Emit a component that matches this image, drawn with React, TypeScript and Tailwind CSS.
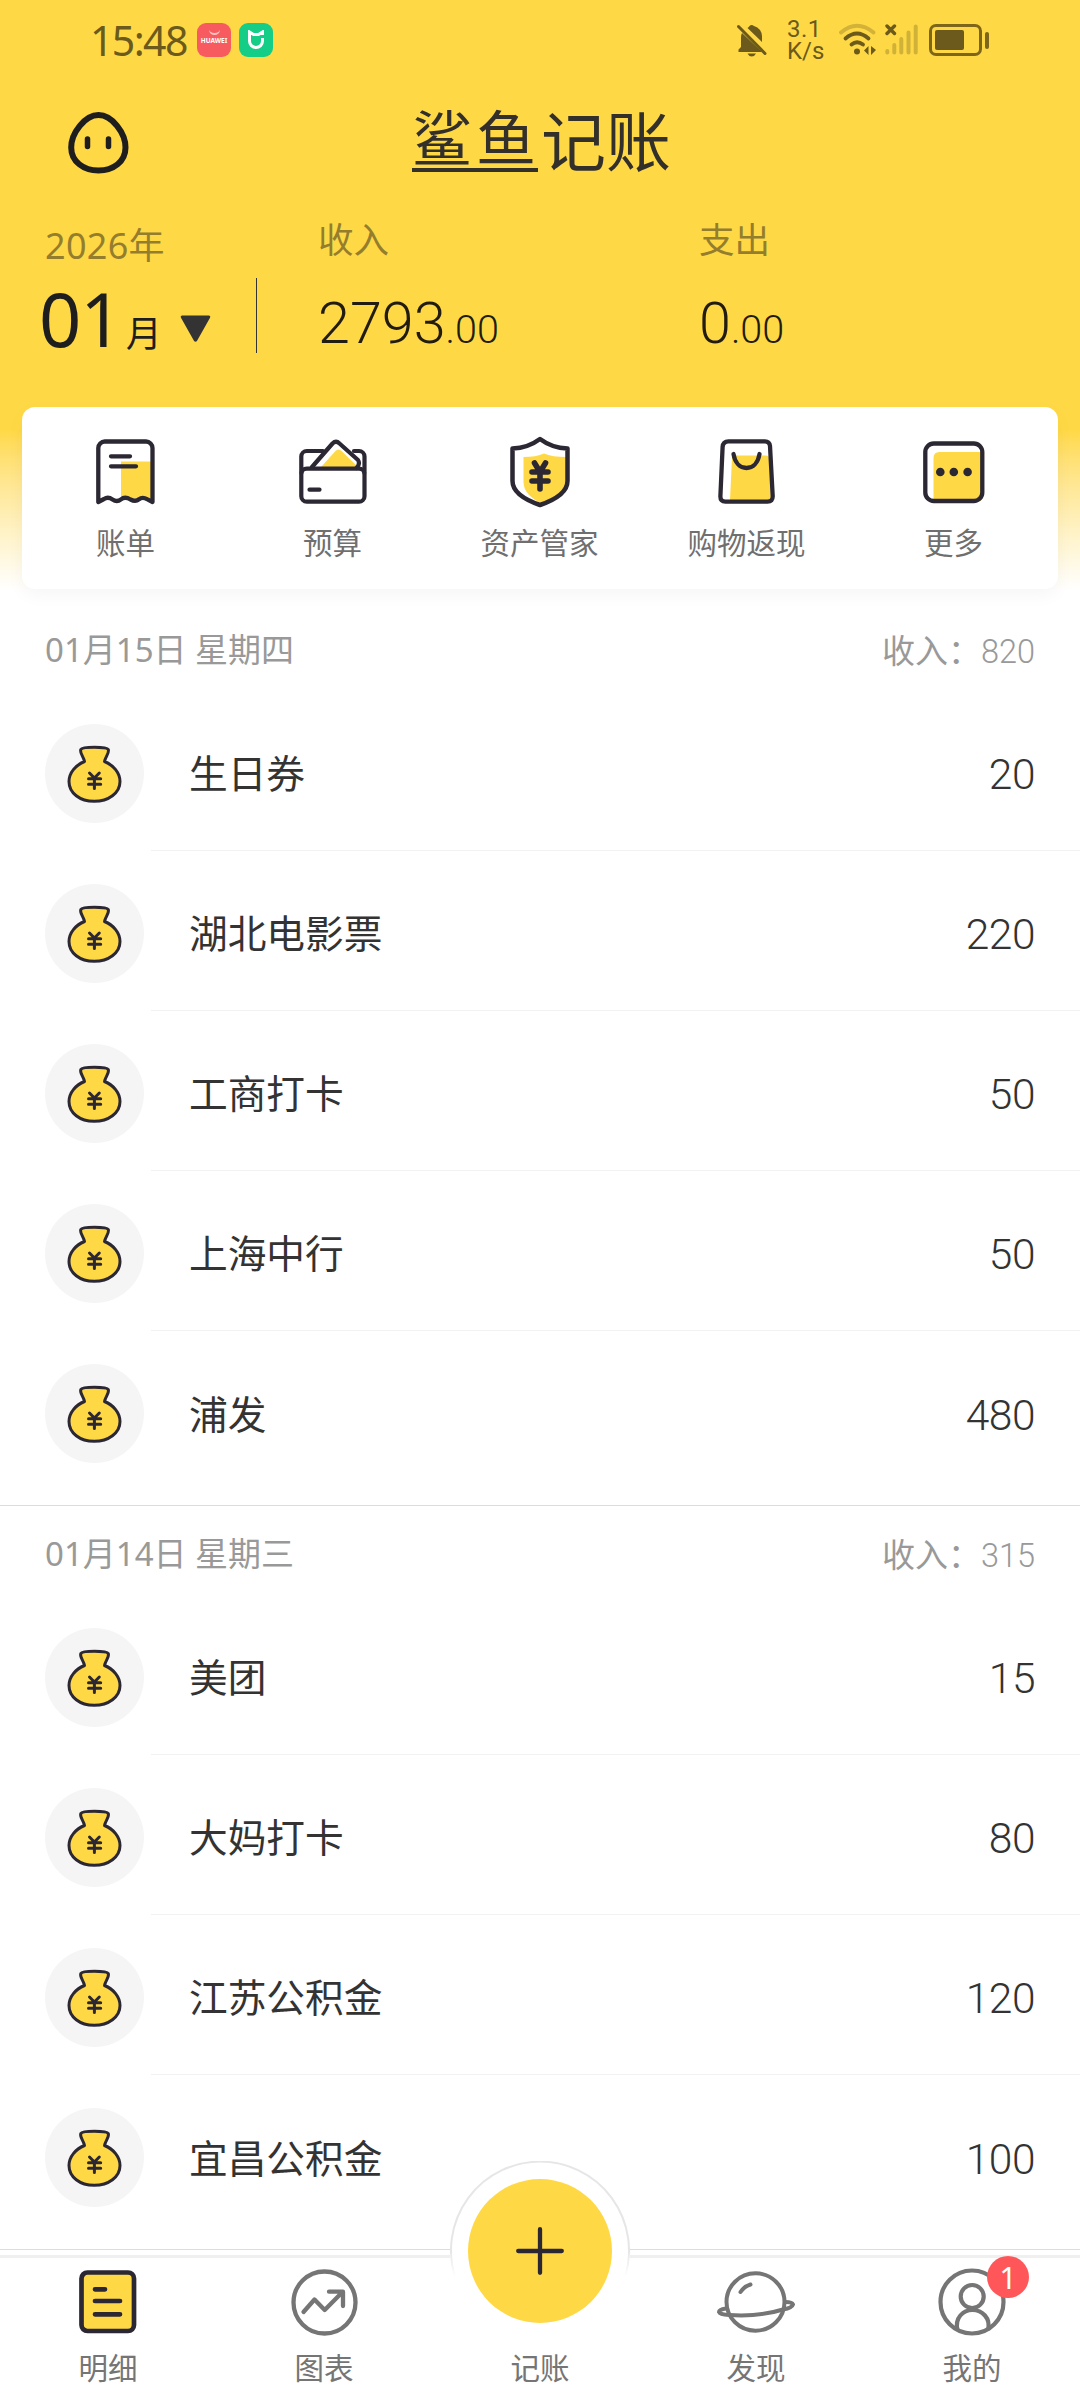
import type { ReactNode } from "react";

const INK = "#2b2733";
const YELLOW = "#ffd945";
const GRAY = "#757575";
const STATUS = "#6b5a1c";

type Entry = { name: string; amount: number };
type Day = { date: string; total: number; entries: Entry[] };

const days: Day[] = [
  {
    date: "01月15日 星期四",
    total: 820,
    entries: [
      { name: "生日券", amount: 20 },
      { name: "湖北电影票", amount: 220 },
      { name: "工商打卡", amount: 50 },
      { name: "上海中行", amount: 50 },
      { name: "浦发", amount: 480 },
    ],
  },
  {
    date: "01月14日 星期三",
    total: 315,
    entries: [
      { name: "美团", amount: 15 },
      { name: "大妈打卡", amount: 80 },
      { name: "江苏公积金", amount: 120 },
      { name: "宜昌公积金", amount: 100 },
    ],
  },
];

function BillIcon() {
  return (
    <svg width="60" height="66" viewBox="0 0 60 66" fill="none" stroke={INK} strokeWidth="4.3" strokeLinecap="round" strokeLinejoin="round">
      <rect x="25" y="22.5" width="30" height="37" fill={YELLOW} stroke="none" />
      <path d="M15 17.3H34M15 27.3H40" />
      <path d="M2.3 63V9a6.5 6.5 0 0 1 6.5-6.5H50a6.5 6.5 0 0 1 6.5 6.5V63L51 60.2Q46.5 57.5 43 60.3T34.5 60.5Q29 57 25 60.3T16.5 60.5Q12 57.3 8 60Z" />
    </svg>
  );
}

function WalletIcon() {
  return (
    <svg width="68" height="66" viewBox="0 0 68 66" fill="none" stroke={INK} strokeWidth="4.2" strokeLinecap="round" strokeLinejoin="round">
      <path d="M22 28L36.5 12Q39.5 9 42.5 12L57 26V28Z" fill={YELLOW} stroke="none" />
      <path d="M2.3 34V17.5a5.5 5.5 0 0 1 5.5-5.500H24M55 12H60a5.500 5.500 0 0 1 5.500 5.500V34" />
      <path d="M13 28L33.500 4.500Q37 1 40.500 4.500L59 21Q61.500 25 57.500 29" />
      <rect x="2.3" y="29.7" width="63.2" height="33" rx="5.5" />
      <path d="M10.5 50.7H20.5" />
    </svg>
  );
}

function ShieldIcon() {
  return (
    <svg width="60" height="72" viewBox="0 0 60 72" fill="none" stroke={INK} strokeWidth="4.5" strokeLinecap="round" strokeLinejoin="round">
      <path d="M13.5 21Q26 21 34 17.500Q42 21 57 21V45C57 56 44 64 32 68C21 62 13.500 56 13.500 46Z" fill={YELLOW} stroke="none" />
      <path d="M30 3Q42 12 57.500 12.500V45C57.500 57 43 64.500 30 69C17 64.500 2.500 57 2.500 45V12.500Q18 12 30 3Z" />
      <path d="M24.500 27L30 36L35.500 27M22 36H38M22 45H38M30 36V53" strokeWidth="5.6" />
    </svg>
  );
}

function ShoppingIcon() {
  return (
    <svg width="58" height="66" viewBox="0 0 58 66" fill="none" stroke={INK} strokeWidth="4.3" strokeLinecap="round" strokeLinejoin="round">
      <path d="M14 19Q14 16.5 17 16.5H48Q51 16.5 51 19L53 61H12Z" fill={YELLOW} stroke="none" />
      <path d="M10.5 2.3H47Q51.5 2.3 52 7L54.7 57Q54.9 62.7 49.5 62.7H7.5Q2.2 62.7 2.4 57L4.6 8Q5 2.3 10.5 2.3Z" />
      <path d="M15.5 15C17 24 22 29 28.5 29S40 24 41.5 15" />
    </svg>
  );
}

function MoreIcon() {
  return (
    <svg width="62" height="63" viewBox="0 0 62 63" fill="none" stroke={INK} strokeWidth="4.3">
      <path d="M10.5 60V17Q10.5 11 16.5 11H58V60Z" fill={YELLOW} stroke="none" />
      <rect x="2.3" y="2.5" width="57" height="57.5" rx="8.5" />
      <g fill={INK} stroke="none">
        <circle cx="17.3" cy="31" r="4.3" />
        <circle cx="30.8" cy="31" r="4.3" />
        <circle cx="44.6" cy="31" r="4.3" />
      </g>
    </svg>
  );
}

function MoneyBag() {
  return (
    <div className="mt-1 size-[99px] shrink-0 rounded-full bg-[#f5f5f5]">
      <svg width="99" height="99" viewBox="0 0 99 99" fill="none" stroke={INK} strokeWidth="3" strokeLinecap="round" strokeLinejoin="round">
        <path
          d="M39.500 37.500C38.500 32.500 34.500 29 35.800 25.500C37.500 22.500 61.500 22.500 63.300 25.500C64.500 29 60.500 32.500 59.500 37.500C68.500 41 75 49 75 57.500C75 69 63.500 77.300 49.200 77.300S24 69 24 57.500C24 49 30.500 41 39.500 37.500Z"
          fill={YELLOW}
        />
        <path d="M44.500 49L49.400 54L54.300 49M43.500 54.700H55.700M43.500 60.300H55.700M49.400 54V64.500" />
      </svg>
    </div>
  );
}

function StatusBar() {
  return (
    <div className="flex h-[80px] items-center pl-[90px] text-[#6b5a1c]">
      <span className="w-[107px] text-[41px] leading-none tracking-[-1.6px]">15:48</span>
      <div className="flex h-[34px] w-[34px] flex-col items-center rounded-[9px] bg-[#f75b5f] pt-1.5">
        <div className="h-[6px] w-[11px] rounded-b-full border-b-2 border-[#ffc2bd]" />
        <span className="mt-px text-[6.5px] leading-[9px] font-bold text-white">HUAWEI</span>
      </div>
      <div className="ml-2 flex size-[34px] items-center justify-center rounded-[9px] bg-[#14cd87]">
        <svg width="18" height="20" viewBox="0 0 18 20" fill="none" stroke="#fff" strokeWidth="3">
          <path d="M2.500 8V2L6.500 4.500H11.500L15.500 2V5M2.500 7V11A6.500 6.500 0 0 0 15.500 11V8" />
        </svg>
      </div>

      <svg className="ml-[464px]" width="30" height="33" viewBox="0 0 30 33" fill={STATUS}>
        <path d="M10.500 4Q12 3 12.500 2Q14.500 0 17 2Q24.500 4.500 25 12V18Z" />
        <path d="M5 9L25 28H1.500V25.500L4 23V13Q4 11 5 9Z" />
        <path d="M10.500 29.500H19Q17.500 32.500 14.700 32.500T10.500 29.500Z" />
        <path d="M1.500 2.500L28 29.500" stroke={STATUS} strokeWidth="3" strokeLinecap="round" />
      </svg>
      <div className="ml-5 flex w-[52px] flex-col font-['Roboto'] text-[24px] leading-[22px]">
        <span className="tracking-[.5px]">3.1</span>
        <span>K/s</span>
      </div>
      <svg width="38" height="34" viewBox="0 0 38 34" fill="none" stroke={STATUS} strokeWidth="3.8" strokeLinecap="round">
        <path d="M2 9.500Q18 -4 34.500 9.500" opacity=".3" />
        <path d="M6.500 15.500Q18 5.500 29.500 15.500M12.500 21.500Q18 17 24 21.500" />
        <circle cx="18" cy="28.500" r="3" fill={STATUS} stroke="none" />
        <path d="M29.500 23V32L25 27.500ZM32 23V32L37 27Z" fill={STATUS} stroke="none" />
      </svg>
      <svg className="ml-2" width="34" height="32" viewBox="0 0 34 32" stroke={STATUS} strokeWidth="4" strokeLinecap="round">
        <path d="M2 2L9.500 9.500M9.500 2L2 9.500" strokeWidth="3.4" />
        <path d="M2.300 27V28.500M9.300 21V28.500M16.300 15V28.500M23.500 8.500V28.500M30.700 2.500V28.500" opacity=".3" />
      </svg>
      <div className="ml-[10px] flex h-[32px] w-[53px] items-center rounded-[7px] border-3 border-[#7d651a] pl-[3px]">
        <div className="h-[20px] w-[29px] rounded-[2px] bg-[#6b5a1c]" />
      </div>
      <div className="ml-[3px] h-[17px] w-1 rounded-sm bg-[#7d651a]" />
    </div>
  );
}

function TitleBar() {
  return (
    <div className="flex h-[128px] items-start pl-[68px]">
      <svg className="mt-8" width="61" height="62" viewBox="0 0 61 62" fill="none" stroke="#1e1e1e" strokeWidth="6" strokeLinecap="round">
        <path d="M30.500 3C44 3 57.500 21 57.500 35.500C57.500 49.500 45.500 58.500 30.500 58.500S3.200 49.500 3.200 35.500C3.200 21 17 3 30.500 3Z" />
        <path d="M19.500 27V34.500M40.500 27V34.500" strokeWidth="5.5" />
      </svg>
      <h1 className="ml-[283px] flex items-start pt-8 text-[#33302c]">
        <span className="h-[60px] w-[126px] border-b-4 text-[60px] leading-[52px] tracking-[4px] whitespace-nowrap">鲨鱼</span>
        <span className="pl-[3px] text-[65px] leading-[58px]">记账</span>
      </h1>
    </div>
  );
}

function Money({ label, whole }: { label: string; whole: string }) {
  return (
    <div className="w-[381px] pt-3">
      <div className="text-[35.5px] leading-[38px] text-[#947e2e]">{label}</div>
      <div className="mt-[31px] font-['Roboto'] text-[57.5px] leading-[70px] font-light text-[#221c10]">
        {whole}
        <span className="text-[39.5px]">.00</span>
      </div>
    </div>
  );
}

function Summary() {
  return (
    <div className="flex h-[199px]">
      <div className="w-[256px] pt-[19px] pl-[45px]">
        <div className="text-[36px] leading-[38px] tracking-[.3px] text-[#947e2e]">2026年</div>
        <div className="mt-[14px] -ml-[6px] flex items-baseline leading-[80px] text-[#1e1e1e]">
          <span className="text-[74px] tracking-[-1px]">01</span>
          <span className="ml-1 text-[36px]">月</span>
          <svg className="mt-1 ml-[18px] self-center" width="31" height="28" viewBox="0 0 32 28" fill="#333">
            <path d="M2 0H30Q32 .5 31 2.500L17.500 26.500Q16 28 14.500 26.500L1 2.500Q0 .5 2 0Z" />
          </svg>
        </div>
      </div>
      <div className="mt-[70px] mr-[61px] h-[75px] w-px bg-[#333]" />
      <Money label="收入" whole="2793" />
      <Money label="支出" whole="0" />
    </div>
  );
}

function Shortcut({ label, children }: { label: string; children: ReactNode }) {
  return (
    <div className="flex w-[207px] flex-col items-center">
      <div className="flex h-[72px] items-center">{children}</div>
      <span className="mt-[19px] text-[29.5px] leading-[32px] text-[#6f6f6f]">{label}</span>
    </div>
  );
}

function DaySection({ day }: { day: Day }) {
  return (
    <section className="border-b border-[#dcdcdc] pb-[14px]">
      <div className="flex h-[89px] items-center justify-between pt-1.5 pr-[45px] pl-[45px] text-[33px] text-[#999]">
        <span>{day.date}</span>
        <span className="pt-1">
          收入：
          <span className="font-['Roboto'] text-[32.5px] font-light">{day.total}</span>
        </span>
      </div>
      {day.entries.map((entry, i) => (
        <div key={entry.name} className="flex h-[160px] items-center pl-[45px]">
          <MoneyBag />
          <div
            className={
              i < day.entries.length - 1
                ? "ml-[7px] flex h-full flex-1 items-center justify-between border-b border-[#f2f2f2] pr-[45px] pl-[38px]"
                : "ml-[7px] flex h-full flex-1 items-center justify-between pr-[45px] pl-[38px]"
            }
          >
            <span className="pt-1.5 text-[38.7px] text-[#333]">{entry.name}</span>
            <span className="pt-[9px] font-['Roboto'] text-[42.5px] font-light tracking-[-.5px] text-[#333]">{entry.amount}</span>
          </div>
        </div>
      ))}
    </section>
  );
}

function Tab({ label, children }: { label: string; children?: ReactNode }) {
  return (
    <div className="flex w-[216px] flex-col items-center pt-[7px]">
      <div className="flex h-[74px] items-center">{children}</div>
      <span className="mt-[13px] text-[29.5px] leading-[32px] text-[#757575]">{label}</span>
    </div>
  );
}

function TabBar() {
  return (
    <nav className="relative mt-[5px] flex h-[145px] border-t-3 border-[#f0f0f0] bg-white">
      <Tab label="明细">
        <svg width="58" height="64" viewBox="0 0 58 64" fill="none" stroke={INK} strokeWidth="4.7" strokeLinecap="round">
          <rect x="2.5" y="2.5" width="52.5" height="58.5" rx="6" fill={YELLOW} />
          <path d="M16 19.300H26M16 31H41M16 44.300H41" />
        </svg>
      </Tab>
      <Tab label="图表">
        <svg width="67" height="67" viewBox="0 0 67 67" fill="none" stroke={GRAY} strokeWidth="4.3" strokeLinecap="round" strokeLinejoin="round">
          <circle cx="33.5" cy="33.5" r="31" />
          <path d="M12.500 43L23.500 30.500L33.700 41L51.500 23M38 22.700H52V37" />
        </svg>
      </Tab>
      <Tab label="记账" />
      <Tab label="发现">
        <svg width="78" height="62" viewBox="0 0 78 62" fill="none" stroke={GRAY} strokeWidth="4" strokeLinecap="round">
          <ellipse cx="38.5" cy="31" rx="29" ry="28.7" />
          <path d="M9 37.500Q2 38.500 2 41Q3 43.500 12 44Q42 46 66 38.500Q75 37 76 33.500Q75 31 68.500 31" />
          <path d="M23.500 21Q27 15.500 33.500 13.500" />
        </svg>
      </Tab>
      <Tab label="我的">
        <div className="relative">
          <svg width="68" height="68" viewBox="0 0 68 68" fill="none" stroke={GRAY} strokeWidth="4.2">
            <circle cx="34" cy="34" r="31.5" />
            <circle cx="34.2" cy="28.5" r="11.5" />
            <path d="M19.500 62C16.500 50 25 42 34.500 42S53 50 50 62" />
          </svg>
          <span className="absolute -top-3 left-[49px] flex size-[42px] items-center justify-center rounded-full bg-[#ff5759] text-[31px] text-white">
            1
          </span>
        </div>
      </Tab>

      {/* raised add button, its ring breaks the bar's top border */}
      <div className="absolute -top-[97px] left-[450px] flex size-[180px] items-center justify-center rounded-full bg-white">
        <svg className="absolute inset-0" width="180" height="180" viewBox="0 0 180 180" fill="none">
          <defs>
            <linearGradient id="ring" x1="0" y1="90" x2="0" y2="116" gradientUnits="userSpaceOnUse">
              <stop stopColor="#e6e6e6" />
              <stop offset="1" stopColor="#ffffff" />
            </linearGradient>
          </defs>
          <path d="M5 116A89 89 0 1 1 175 116" stroke="url(#ring)" strokeWidth="2" />
        </svg>
        <div className="flex size-[144px] items-center justify-center rounded-full bg-[#ffd945]">
          <svg width="48" height="48" viewBox="0 0 48 48" stroke={INK} strokeWidth="4.3" strokeLinecap="round">
            <path d="M24 2.200V45.800M2.200 24H45.800" />
          </svg>
        </div>
      </div>
    </nav>
  );
}

export default function App() {
  return (
    <main className="h-[2400px] w-[1080px] overflow-hidden bg-white font-['Noto_Sans','Noto_Sans_CJK_SC',sans-serif]">
      <header className="h-[602px] bg-linear-to-b from-[#ffd945] from-[430px] to-white to-[590px]">
        <StatusBar />
        <TitleBar />
        <Summary />
        <div className="mx-[22px] flex h-[182px] rounded-[13px] bg-white pt-[29px] shadow-[0_6px_18px_rgba(0,0,0,0.04)]">
          <Shortcut label="账单"><BillIcon /></Shortcut>
          <Shortcut label="预算"><WalletIcon /></Shortcut>
          <Shortcut label="资产管家"><ShieldIcon /></Shortcut>
          <Shortcut label="购物返现"><ShoppingIcon /></Shortcut>
          <Shortcut label="更多"><MoreIcon /></Shortcut>
        </div>
      </header>

      {days.map((day) => (
        <DaySection key={day.date} day={day} />
      ))}

      <TabBar />
    </main>
  );
}
